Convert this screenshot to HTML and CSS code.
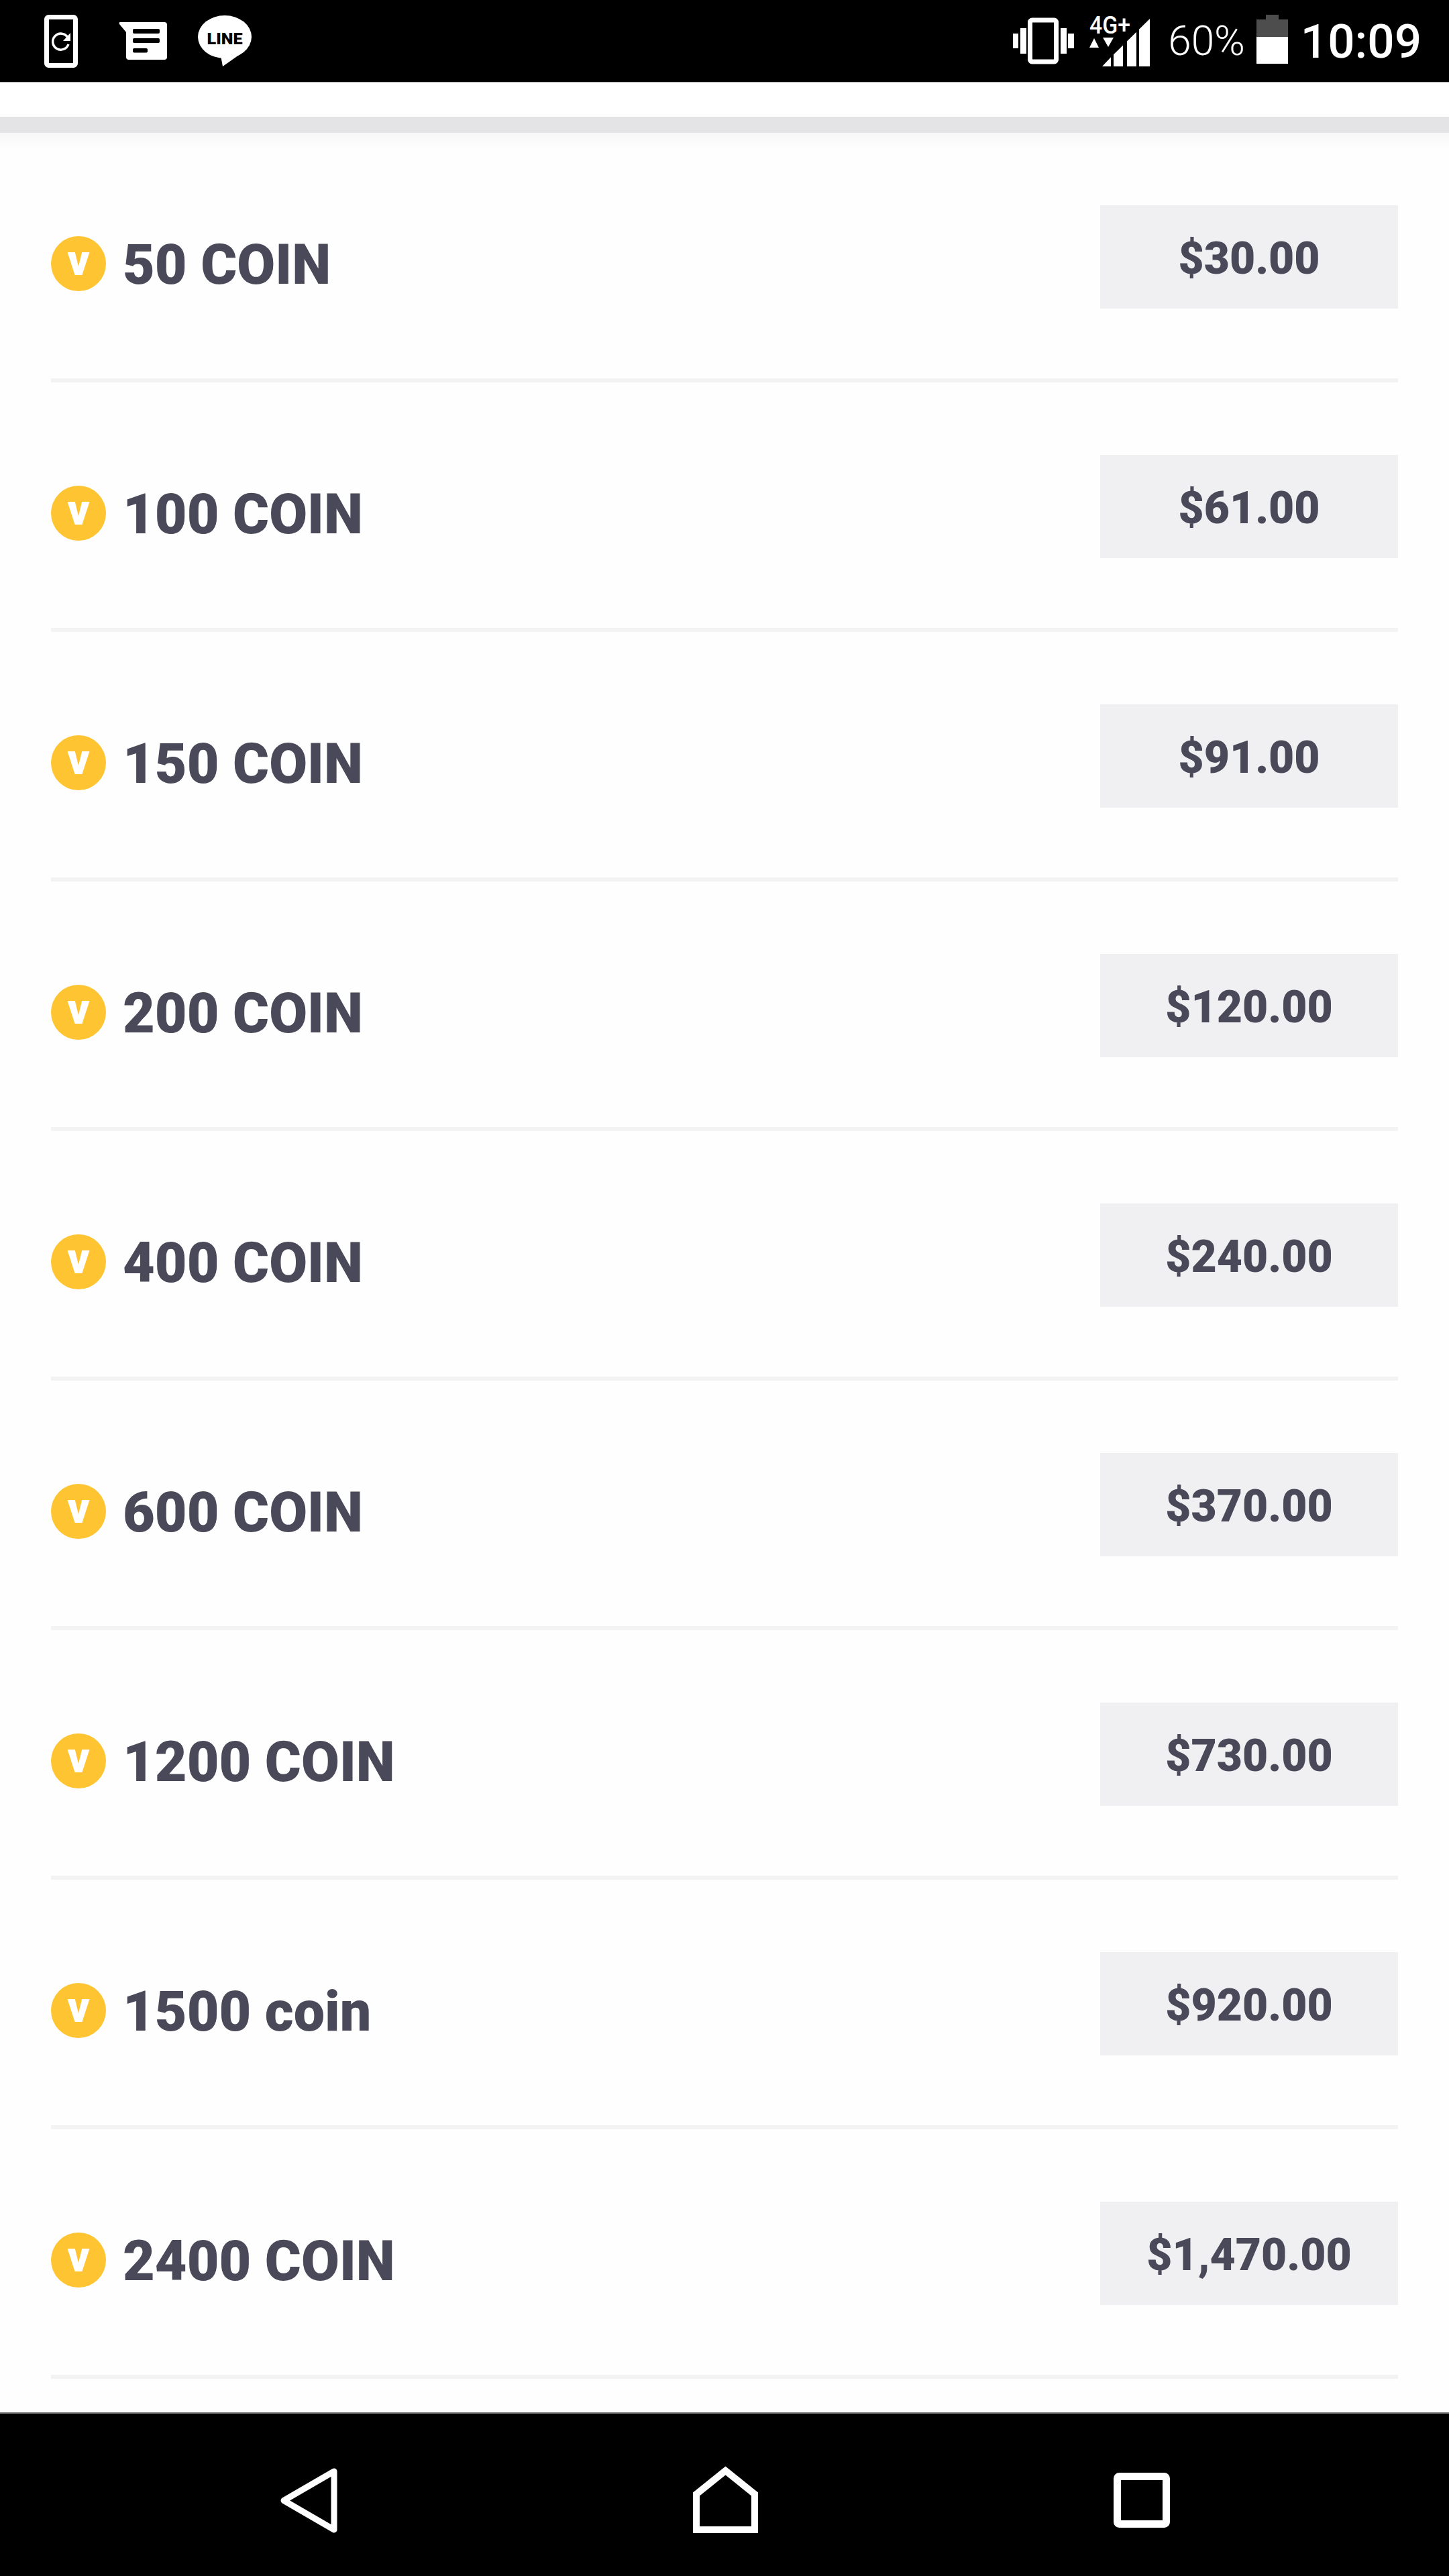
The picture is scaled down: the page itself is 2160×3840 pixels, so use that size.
FILE: index.html
```html
<!DOCTYPE html>
<html lang="en">
<head>
<meta charset="utf-8">
<title>Coin prices</title>
<link rel="stylesheet" href="styles.css">
</head>
<body>
<div class="screen">
  <header class="status">
    <div class="status-left">
      <svg class="ic-phone" viewBox="0 0 50 79"><rect x="3.500" y="3.500" width="43" height="72" rx="3" fill="none" stroke="#fff" stroke-width="7"/><path d="M35 34A12 12 0 1 0 36 44" fill="none" stroke="#fff" stroke-width="3.500"/><path d="M39 27V39H28Z" fill="#fff"/></svg>
      <svg class="ic-msg" viewBox="0 0 72 58"><path d="M2 1H68a4 4 0 0 1 4 4V53a4 4 0 0 1-4 4H15a4 4 0 0 1-4-4V16L1 4Q0 1 2 1Z" fill="#fff"/><rect x="21" y="11" width="40" height="7" rx="2"/><rect x="21" y="25" width="40" height="7" rx="2"/><rect x="21" y="40" width="22" height="6.500" rx="2"/></svg>
      <svg class="ic-line" viewBox="0 0 80 76"><ellipse cx="40" cy="32" rx="40" ry="32" fill="#fff"/><path d="M34 60L37 76L64 57Z" fill="#fff"/><text class="line-text" x="40" y="43" text-anchor="middle" textLength="53" lengthAdjust="spacingAndGlyphs">LINE</text></svg>
    </div>
    <div class="status-right">
      <svg class="ic-vib" viewBox="0 0 91 68"><rect x="0" y="23" width="8" height="22" fill="#fff"/><rect x="11" y="15" width="9" height="38" fill="#fff"/><rect x="25.500" y="3" width="39" height="62" rx="3" fill="none" stroke="#fff" stroke-width="7"/><rect x="71" y="15" width="9" height="38" fill="#fff"/><rect x="82" y="23" width="9" height="22" fill="#fff"/></svg>
      <svg class="ic-net" viewBox="0 0 90 75"><text class="net-text" x="0" y="26" textLength="61" lengthAdjust="spacingAndGlyphs">4G+</text><path d="M0 47L7 33L14 47Z" fill="#fff"/><path d="M20 32H36L28 46Z" fill="#fff"/><path d="M19 75H32V61.200ZM36 75H50V43.400L36 57.300ZM56 75H70V23.700L56 37.500ZM74 75H90V4L74 19.800Z" fill="#fff"/></svg>
      <span class="pct">60%</span>
      <svg class="ic-bat" viewBox="0 0 47 80"><path d="M0 34V8H14V1H33V8H47V34Z" fill="#4d4d4d"/><rect x="0" y="34" width="47" height="40" fill="#fff"/></svg>
      <span class="time">10:09</span>
    </div>
  </header>
  <div class="topbar"></div>
  <main class="list">
    <div class="row"><div class="label"><span class="coin">v</span><span class="name">50 COIN</span></div><div class="price">$30.00</div></div>
    <div class="row"><div class="label"><span class="coin">v</span><span class="name">100 COIN</span></div><div class="price">$61.00</div></div>
    <div class="row"><div class="label"><span class="coin">v</span><span class="name">150 COIN</span></div><div class="price">$91.00</div></div>
    <div class="row"><div class="label"><span class="coin">v</span><span class="name">200 COIN</span></div><div class="price">$120.00</div></div>
    <div class="row"><div class="label"><span class="coin">v</span><span class="name">400 COIN</span></div><div class="price">$240.00</div></div>
    <div class="row"><div class="label"><span class="coin">v</span><span class="name">600 COIN</span></div><div class="price">$370.00</div></div>
    <div class="row"><div class="label"><span class="coin">v</span><span class="name">1200 COIN</span></div><div class="price">$730.00</div></div>
    <div class="row"><div class="label"><span class="coin">v</span><span class="name">1500 coin</span></div><div class="price">$920.00</div></div>
    <div class="row"><div class="label"><span class="coin">v</span><span class="name">2400 COIN</span></div><div class="price">$1,470.00</div></div>
  </main>
  <nav class="nav">
    <svg class="ic-back" viewBox="0 0 86 104"><path d="M81 10L6 53.500L81 97Z" fill="none" stroke="#fff" stroke-width="9" stroke-linejoin="round"/></svg>
    <svg class="ic-home" viewBox="0 0 97 104"><path d="M5 97V44L48.500 9L92 44V97Z" fill="none" stroke="#fff" stroke-width="10"/></svg>
    <svg class="ic-square" viewBox="0 0 84 104"><rect x="5.500" y="17.500" width="73" height="71" rx="3" fill="none" stroke="#fff" stroke-width="11"/></svg>
  </nav>
</div>
</body>
</html>
```

FILE: styles.css
```css
* { box-sizing: border-box; }
html, body { margin: 0; padding: 0; }
body { font-family: Roboto, "Liberation Sans", sans-serif; background: #fff; }
svg { overflow: visible; flex: none; }
.screen { width: 2160px; height: 3840px; display: flex; flex-direction: column; overflow: hidden; }

.status { height: 122px; flex: none; background: #000; color: #fff; display: flex; justify-content: space-between; align-items: center; padding: 0 41px 0 66px; }
.status-left, .status-right { display: flex; align-items: center; }
.ic-phone { width: 50px; height: 79px; margin-right: 61px; }
.ic-msg { width: 72px; height: 58px; margin-right: 46px; }
.ic-line { width: 80px; height: 76px; }
.line-text { font-family: Roboto, sans-serif; font-weight: 900; font-size: 24px; fill: #000; }
.ic-vib { width: 91px; height: 68px; margin-right: 23px; }
.ic-net { width: 90px; height: 75px; margin-right: 27px; }
.net-text { font-family: Roboto, sans-serif; font-weight: 500; font-size: 36px; fill: #fff; }
.pct { font-size: 62px; font-weight: 300; line-height: 1; margin-right: 17px; }
.ic-bat { width: 47px; height: 80px; margin-right: 19px; }
.time { font-size: 71px; font-weight: 500; line-height: 1; }

.topbar { height: 76px; flex: none; background: #fff; border-top: 1px solid #aaa; border-bottom: 24px solid #e4e4e6; }

.list { flex: 1; min-height: 0; overflow: hidden; padding: 0 76px; background: linear-gradient(#f7f7f7, #fefefe) no-repeat top / 100% 24px, #fefefe; }
.row { height: 372px; display: flex; justify-content: space-between; align-items: center; padding: 108px 0 104px; border-bottom: 6px solid #f3f3f3; }
.label { display: flex; align-items: center; gap: 25px; margin-top: 20px; }
.coin { width: 82px; height: 82px; border-radius: 50%; background: #ffc431; color: #fff; font-size: 64px; font-weight: 900; line-height: 74px; text-align: center; }
.name { font-size: 82.5px; font-weight: 900; color: #494959; line-height: 1; padding-top: 5px; }
.price { width: 444px; height: 154px; background: #f0f0f2; color: #494959; font-size: 66px; font-weight: 900; padding-top: 4px; display: flex; align-items: center; justify-content: center; }

.nav { height: 244px; flex: none; background: #000; border-top: 2px solid #777; display: flex; align-items: flex-start; gap: 530px; padding: 76px 0 0 417px; }
.ic-back { width: 86px; height: 104px; }
.ic-home { width: 97px; height: 104px; }
.ic-square { width: 84px; height: 104px; }
```
